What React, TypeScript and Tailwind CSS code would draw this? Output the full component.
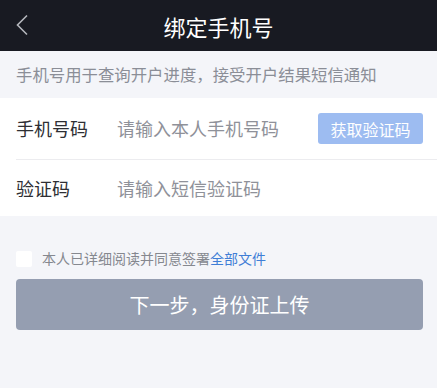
import React from "react";

export default function App() {
  return (
    <div
      className="w-[437px] h-[388px] bg-[#f4f5f9] overflow-hidden"
      style={{ fontFamily: '"Noto Sans CJK SC", "Noto Sans", sans-serif' }}
    >
      <div className="h-[51px] bg-[#181a22] relative flex items-center justify-center">
        <svg className="absolute left-[15px] top-[14px]" width="14" height="22" viewBox="0 0 14 22" fill="none">
          <path d="M12 1.5 L2.5 11 L12 20.5" stroke="#b5b7bd" strokeWidth="1.6" />
        </svg>
        <span className="text-[22px] text-white leading-none">绑定手机号</span>
      </div>
      <div className="h-[47px] flex items-center px-4 text-[16.4px] text-[#8b8e97]">
        手机号用于查询开户进度，接受开户结果短信通知
      </div>
      <div className="bg-white">
        <div className="h-[61px] flex items-center pl-4 pr-[14px]">
          <span className="w-[101px] text-[18px] text-[#2e2f33]">手机号码</span>
          <span className="flex-1 text-[18px] text-[#8f9199]">请输入本人手机号码</span>
          <span className="w-[105px] h-[31px] rounded-[3px] bg-[#9dbcf1] text-white text-[16px] flex items-center justify-center">
            获取验证码
          </span>
        </div>
        <div className="ml-4 h-px bg-[#ececef]" />
        <div className="h-[56px] flex items-center px-4">
          <span className="w-[101px] text-[18px] text-[#2e2f33]">验证码</span>
          <span className="flex-1 text-[18px] text-[#8f9199]">请输入短信验证码</span>
        </div>
      </div>
      <div className="pl-4 pr-[14px] pt-[34px]">
        <div className="flex items-center h-[17px]">
          <span className="w-[16px] h-[16px] bg-white rounded-[2px] mr-[10px]" />
          <span className="text-[14px] text-[#85888f]">
            本人已详细阅读并同意签署<span className="text-[#3f7ed6]">全部文件</span>
          </span>
        </div>
        <div className="mt-[12px] h-[51px] rounded-[4px] bg-[#959eb1] flex items-center justify-center text-[20px] text-white">
          下一步，身份证上传
        </div>
      </div>
    </div>
  );
}
